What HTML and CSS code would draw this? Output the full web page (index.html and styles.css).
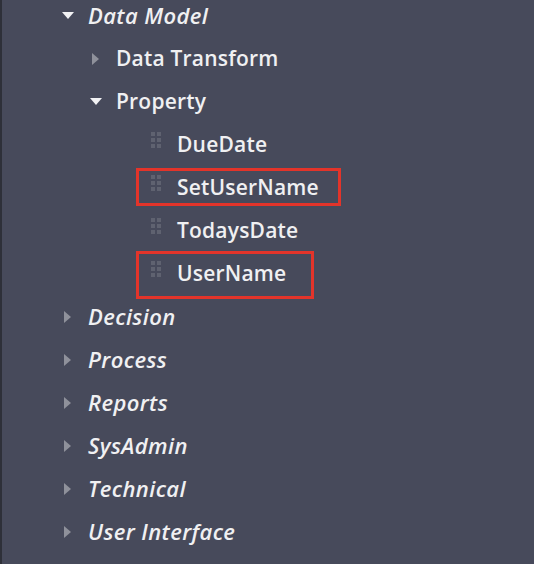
FILE: index.html
```html
<!DOCTYPE html>
<html>
<head>
<meta charset="utf-8">
<link rel="stylesheet" href="styles.css">
</head>
<body>
<div class="panel">
  <ul class="tree">
    <li class="row lvl0 top"><span class="tw down"></span><span class="label">Data Model</span></li>
    <li class="row lvl1"><span class="tw right"></span><span class="label">Data Transform</span></li>
    <li class="row lvl1"><span class="tw down"></span><span class="label">Property</span></li>
    <li class="row lvl2"><span class="grip"><i></i><i></i><i></i><i></i><i></i><i></i></span><span class="label">DueDate</span></li>
    <li class="row lvl2"><span class="mark mark-a"></span><span class="grip"><i></i><i></i><i></i><i></i><i></i><i></i></span><span class="label">SetUserName</span></li>
    <li class="row lvl2"><span class="grip"><i></i><i></i><i></i><i></i><i></i><i></i></span><span class="label">TodaysDate</span></li>
    <li class="row lvl2"><span class="mark mark-b"></span><span class="grip"><i></i><i></i><i></i><i></i><i></i><i></i></span><span class="label">UserName</span></li>
    <li class="row lvl0 top"><span class="tw right"></span><span class="label">Decision</span></li>
    <li class="row lvl0 top"><span class="tw right"></span><span class="label">Process</span></li>
    <li class="row lvl0 top"><span class="tw right"></span><span class="label">Reports</span></li>
    <li class="row lvl0 top"><span class="tw right"></span><span class="label">SysAdmin</span></li>
    <li class="row lvl0 top"><span class="tw right"></span><span class="label">Technical</span></li>
    <li class="row lvl0 top"><span class="tw right"></span><span class="label">User Interface</span></li>
  </ul>
</div>
</body>
</html>
```
FILE: styles.css
```css
html, body {
  margin: 0;
  padding: 0;
  height: 100%;
  overflow: hidden;
  background: #474a5b;
}
.panel {
  height: 564px;
  border-left: 2px solid #2e3039;
  background: #474a5b;
  overflow: hidden;
  font-family: "Open Sans", "Liberation Sans", sans-serif;
  font-weight: 600;
  font-size: 21px;
  color: #f0f0f2;
}
.tree {
  list-style: none;
  margin: -6px 0 0 0;
  padding: 0;
}
.row {
  position: relative;
  display: flex;
  align-items: center;
  height: 43px;
  line-height: 43px;
}
.lvl0 { padding-left: 60px; }
.lvl1 { padding-left: 88px; }
.lvl2 { padding-left: 149px; }
.label {
  white-space: nowrap;
  letter-spacing: 0.2px;
}
.row.top .label {
  font-style: italic;
  font-size: 22px;
  letter-spacing: 0.4px;
}
.tw {
  width: 14px;
  height: 12px;
  margin-right: 12px;
  position: relative;
  flex: none;
}
.tw.down::before {
  content: "";
  position: absolute;
  left: 0;
  top: 2px;
  border-left: 6.5px solid transparent;
  border-right: 6.5px solid transparent;
  border-top: 7px solid #f2f2f4;
}
.tw.right::before {
  content: "";
  position: absolute;
  left: 2px;
  top: 0;
  border-top: 6px solid transparent;
  border-bottom: 6px solid transparent;
  border-left: 7px solid #8f919b;
}
.grip {
  display: grid;
  grid-template-columns: 4px 4px;
  grid-auto-rows: 4px;
  gap: 2px;
  margin-right: 16px;
  margin-top: -9px;
  flex: none;
}
.grip i {
  display: block;
  background: #5f6270;
}
.mark {
  position: absolute;
  border: 3px solid #e3342a;
  box-sizing: border-box;
}
.mark-a {
  left: 134px;
  top: 2px;
  width: 205px;
  height: 38px;
}
.mark-b {
  left: 134px;
  top: -1px;
  width: 178px;
  height: 48px;
}
```
